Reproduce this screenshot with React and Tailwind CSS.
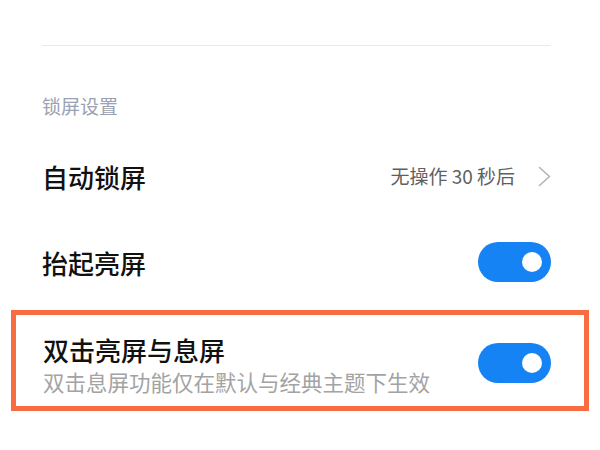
export default function App() {
  const font = { fontFamily: '"Noto Sans CJK SC", "Noto Sans", sans-serif' };
  const Toggle = ({ className = "" }) => (
    <div className={"relative w-[73px] h-[40px] rounded-full bg-[#1583f4] shrink-0 " + className}>
      <div className="absolute right-[9px] top-[10px] w-[20px] h-[20px] rounded-full bg-white" />
    </div>
  );
  return (
    <div className="w-[600px] h-[450px] bg-white overflow-hidden" style={font}>
      <div className="h-[45px]" />
      <div className="ml-[42px] mr-[49px] h-px bg-[#e9e9ec]" />
      <div className="ml-[42px] mt-[47px] h-[26px] leading-[26px] text-[19px] text-[#9aa1b1]">锁屏设置</div>
      <div className="mt-[14px] ml-[42px] mr-[49px] h-[86px] flex items-center justify-between">
        <span className="text-[26px] font-medium text-[#111]">自动锁屏</span>
        <div className="flex items-center">
          <span className="text-[19px] text-[#5f5f5f]">无操作 30 秒后</span>
          <svg className="ml-[23px]" width="13" height="21" viewBox="0 0 13 21" fill="none">
            <polyline points="1.5,1.5 11.5,10.5 1.5,19.5" stroke="#b3b3b3" strokeWidth="1.6" strokeLinecap="round" strokeLinejoin="round" />
          </svg>
        </div>
      </div>
      <div className="ml-[42px] mr-[49px] h-[86px] flex items-center justify-between">
        <span className="text-[26px] font-medium text-[#111]">抬起亮屏</span>
        <Toggle />
      </div>
      <div className="mt-[5px] mx-[11px] h-[101px] border-[5px] border-[#f76c40] flex items-center justify-between pl-[27px] pr-[33px]">
        <div className="flex flex-col">
          <span className="mt-[8px] h-[34px] leading-[34px] text-[26px] font-medium text-[#111]">双击亮屏与息屏</span>
          <span className="mt-[1px] h-[28px] leading-[28px] text-[21.5px] text-[#a3a3a3]">双击息屏功能仅在默认与经典主题下生效</span>
        </div>
        <Toggle className="mt-[5px]" />
      </div>
    </div>
  );
}
